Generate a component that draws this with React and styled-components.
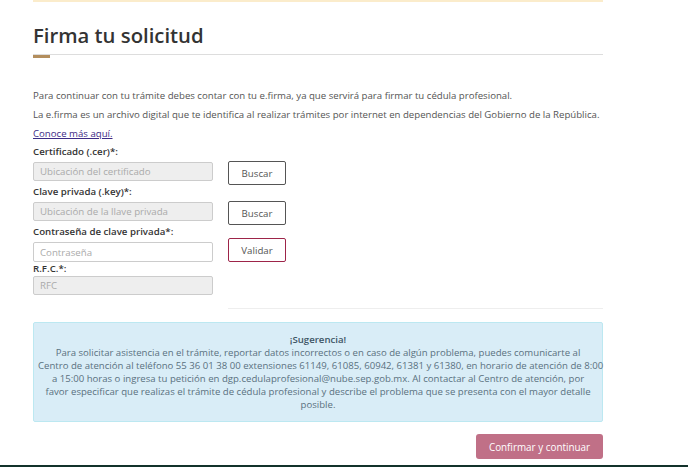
import React from "react";
import styled, { createGlobalStyle } from "styled-components";

const GlobalStyle = createGlobalStyle`
  html, body {
    margin: 0;
    padding: 0;
    background: #fff;
  }
  body {
    font-family: "Open Sans", "Noto Sans", sans-serif;
    color: #545454;
  }
`;

const Page = styled.div`
  min-height: 467px;
  box-sizing: border-box;
  border-bottom: 2px solid #13322b;
`;

const Container = styled.div`
  width: 570px;
  margin: 0 0 0 33px;
  border-top: 2px solid #fbeccb;
  padding-bottom: 6px;
`;

const Title = styled.h2`
  margin: 20px 0 0;
  font-size: 20.3px;
  font-weight: 600;
  color: #333;
  line-height: 26px;
`;

const TitleRule = styled.div`
  position: relative;
  height: 1px;
  background: #ddd;
  margin-top: 6px;

  &::after {
    content: "";
    position: absolute;
    left: 0;
    top: 1px;
    width: 17px;
    height: 3px;
    background: #b38e5d;
  }
`;

const Intro = styled.p`
  margin: ${(p) => (p.$first ? "31px" : "0")} 0 0;
  font-size: 9.65px;
  line-height: 19px;
  color: #545454;
  white-space: nowrap;
`;

const Link = styled.a`
  color: #3d2b86;
  text-decoration: underline;
`;

const Form = styled.div`
  margin-top: 2px;
`;

const Row = styled.div`
  display: flex;
  align-items: flex-end;
  gap: 15px;
`;

const Field = styled.div`
  width: 180px;
  padding-bottom: ${(p) => p.$pad || 0}px;
`;

const Label = styled.label`
  display: block;
  font-size: 9.7px;
  font-weight: 600;
  color: #333;
  line-height: 14px;
  margin-bottom: ${(p) => p.$gap ?? 3}px;
`;

const Input = styled.input`
  display: block;
  box-sizing: border-box;
  width: 180px;
  height: ${(p) => (p.disabled ? 19 : 20)}px;
  padding: 0 6px;
  border: 1px solid #ccc;
  border-radius: 2px;
  background: ${(p) => (p.disabled ? "#eee" : "#fff")};
  font-family: inherit;
  font-size: 9.7px;
  color: #555;
  outline: none;

  &::placeholder {
    color: #aaa;
  }
`;

const SideButton = styled.button`
  box-sizing: border-box;
  width: 58px;
  height: 24px;
  padding: 0;
  background: #fff;
  border: 1px solid ${(p) => (p.$accent ? "#9d2449" : "#555")};
  border-radius: 2px;
  font-family: inherit;
  font-size: 9.7px;
  color: #555;
  cursor: pointer;
`;

const Divider = styled.div`
  height: 1px;
  background: #eee;
  margin: 13px 0 0 195px;
`;

const Alert = styled.div`
  margin-top: 13px;
  box-sizing: border-box;
  padding: 10px 4px;
  background: #d9edf7;
  border: 1px solid #bce8f1;
  border-radius: 2px;
  text-align: center;
  font-size: 9.6px;
  line-height: 13px;
  color: #5a7180;
  white-space: nowrap;
`;

const AlertTitle = styled.div`
  font-weight: 600;
  color: #3e5565;
`;

const Actions = styled.div`
  display: flex;
  justify-content: flex-end;
  margin-top: 12px;
`;

const PrimaryButton = styled.button`
  box-sizing: border-box;
  width: 127px;
  height: 25px;
  padding: 0;
  background: #c07087;
  border: none;
  border-radius: 3px;
  color: #fff;
  font-family: inherit;
  font-size: 9.9px;
  cursor: pointer;
`;

export default function App() {
  return (
    <Page>
      <GlobalStyle />
      <Container>
        <Title>Firma tu solicitud</Title>
        <TitleRule />

        <Intro $first>
          Para continuar con tu trámite debes contar con tu e.firma, ya que
          servirá para firmar tu cédula profesional.
        </Intro>
        <Intro>
          La e.firma es un archivo digital que te identifica al realizar
          trámites por internet en dependencias del Gobierno de la República.
        </Intro>
        <Intro>
          <Link href="#">Conoce más aquí.</Link>
        </Intro>

        <Form>
          <Row>
            <Field $pad={4}>
              <Label>Certificado (.cer)*:</Label>
              <Input disabled placeholder="Ubicación del certificado" />
            </Field>
            <SideButton>Buscar</SideButton>
          </Row>
          <Row>
            <Field $pad={4}>
              <Label>Clave privada (.key)*:</Label>
              <Input disabled placeholder="Ubicación de la llave privada" />
            </Field>
            <SideButton>Buscar</SideButton>
          </Row>
          <Row>
            <Field>
              <Label>Contraseña de clave privada*:</Label>
              <Input type="password" placeholder="Contraseña" />
            </Field>
            <SideButton $accent>Validar</SideButton>
          </Row>
          <Row>
            <Field>
              <Label $gap={0}>R.F.C.*:</Label>
              <Input disabled placeholder="RFC" />
            </Field>
          </Row>
        </Form>

        <Divider />

        <Alert>
          <AlertTitle>¡Sugerencia!</AlertTitle>
          Para solicitar asistencia en el trámite, reportar datos incorrectos o
          en caso de algún problema, puedes comunicarte al
          <br />
          Centro de atención al teléfono 55 36 01 38 00 extensiones 61149,
          61085, 60942, 61381 y 61380, en horario de atención de 8:00
          <br />
          a 15:00 horas o ingresa tu petición en
          dgp.cedulaprofesional@nube.sep.gob.mx. Al contactar al Centro de
          atención, por
          <br />
          favor especificar que realizas el trámite de cédula profesional y
          describe el problema que se presenta con el mayor detalle
          <br />
          posible.
        </Alert>

        <Actions>
          <PrimaryButton>Confirmar y continuar</PrimaryButton>
        </Actions>
      </Container>
    </Page>
  );
}
